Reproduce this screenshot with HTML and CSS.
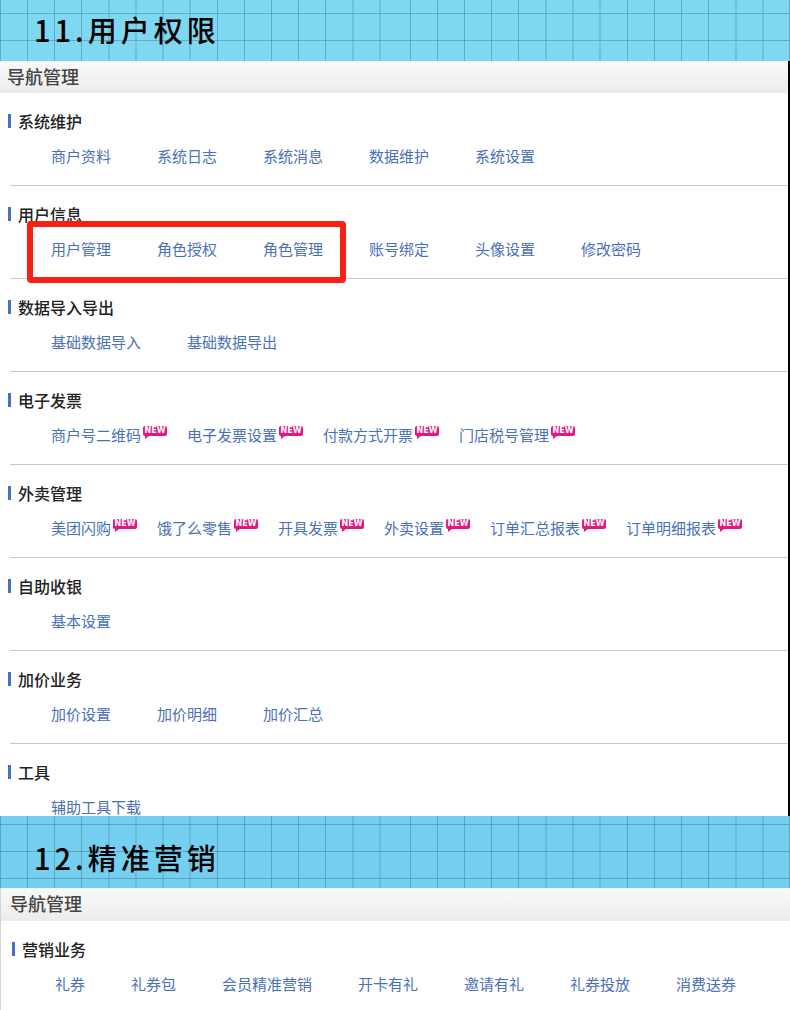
FILE: index.html
```
<!DOCTYPE html>
<html lang="zh-CN">
<head>
    <meta charset="UTF-8">
    <title>导航管理</title>
    <link rel="stylesheet" href="styles.css">
</head>
<body>
    <div class="banner">
        <svg class="grid" aria-hidden="true">
            <defs>
                <path id="columns" class="grid-line" d="M.5 0V28M27.5 0V28M54.5 0V28M81.5 0V28M109 0V28M136 0V28M163 0V28M190 0V28M217.5 0V28M244.5 0V28M271.5 0V28M298.5 0V28M325.5 0V28M353 0V28M380 0V28M410.5 0V28M437.5 0V28M464.5 0V28M491.5 0V28M518.5 0V28M546 0V28M573 0V28M600 0V28M627.5 0V28M654.5 0V28M681.5 0V28M708.5 0V28M736 0V28M763 0V28M789.5 0V28M0 13.5H790"/>
                <pattern id="grid1" width="790" height="27" patternUnits="userSpaceOnUse">
                    <use href="#columns"/>
                </pattern>
                <pattern id="grid2" y="-5" width="790" height="27" patternUnits="userSpaceOnUse">
                    <use href="#columns"/>
                </pattern>
            </defs>
            <rect width="100%" height="100%" fill="url(#grid1)"/>
        </svg>
        <h1>11.用户权限</h1>
    </div>

    <div class="panel dark-edge">
        <h2 class="panel-title">导航管理</h2>
        <div class="section">
            <h3>系统维护</h3>
            <div class="links">
                <a href="#">商户资料</a>
                <a href="#">系统日志</a>
                <a href="#">系统消息</a>
                <a href="#">数据维护</a>
                <a href="#">系统设置</a>
            </div>
        </div>
        <div class="section">
            <h3>用户信息</h3>
            <div class="links">
                <div class="marked">
                    <a href="#">用户管理</a>
                    <a href="#">角色授权</a>
                    <a href="#">角色管理</a>
                </div>
                <a href="#">账号绑定</a>
                <a href="#">头像设置</a>
                <a href="#">修改密码</a>
            </div>
        </div>
        <div class="section">
            <h3>数据导入导出</h3>
            <div class="links">
                <a href="#">基础数据导入</a>
                <a href="#">基础数据导出</a>
            </div>
        </div>
        <div class="section">
            <h3>电子发票</h3>
            <div class="links">
                <a href="#">商户号二维码<span class="new">NEW</span></a>
                <a href="#">电子发票设置<span class="new">NEW</span></a>
                <a href="#">付款方式开票<span class="new">NEW</span></a>
                <a href="#">门店税号管理<span class="new">NEW</span></a>
            </div>
        </div>
        <div class="section">
            <h3>外卖管理</h3>
            <div class="links">
                <a href="#">美团闪购<span class="new">NEW</span></a>
                <a href="#">饿了么零售<span class="new">NEW</span></a>
                <a href="#">开具发票<span class="new">NEW</span></a>
                <a href="#">外卖设置<span class="new">NEW</span></a>
                <a href="#">订单汇总报表<span class="new">NEW</span></a>
                <a href="#">订单明细报表<span class="new">NEW</span></a>
            </div>
        </div>
        <div class="section">
            <h3>自助收银</h3>
            <div class="links">
                <a href="#">基本设置</a>
            </div>
        </div>
        <div class="section">
            <h3>加价业务</h3>
            <div class="links">
                <a href="#">加价设置</a>
                <a href="#">加价明细</a>
                <a href="#">加价汇总</a>
            </div>
        </div>
        <div class="section">
            <h3>工具</h3>
            <div class="links">
                <a href="#">辅助工具下载</a>
            </div>
        </div>
    </div>

    <div class="banner banner-tall">
        <svg class="grid" aria-hidden="true">
            <rect width="100%" height="100%" fill="url(#grid2)"/>
        </svg>
        <h1>12.精准营销</h1>
    </div>

    <div class="panel light-edge">
        <h2 class="panel-title">导航管理</h2>
        <div class="section">
            <h3>营销业务</h3>
            <div class="links">
                <a href="#">礼券</a>
                <a href="#">礼券包</a>
                <a href="#">会员精准营销</a>
                <a href="#">开卡有礼</a>
                <a href="#">邀请有礼</a>
                <a href="#">礼券投放</a>
                <a href="#">消费送券</a>
            </div>
        </div>
    </div>
</body>
</html>
```
FILE: styles.css
```
*{
    margin: 0;
    padding: 0;
    box-sizing: border-box;
}
body{
    background: #fff;
    font-family: "Noto Sans CJK SC", sans-serif;
}
a{
    color: #4a70b8;
    text-decoration: none;
}
a:hover{
    text-decoration: underline;
}

/*标题横幅*/
.banner{
    position: relative;
    padding: 9px 34px 12px;
    background: #7fd8f1;
}
.banner-tall{
    padding: 21px 34px 11px;
    background: #75cff0;
}
.banner h1{
    position: relative;
    font-size: 29px;
    font-weight: 500;
    line-height: 40px;
    letter-spacing: 4px;
    color: #000;
}
/*网格铺满横幅*/
.grid{
    position: absolute;
    left: 0;
    top: 0;
    width: 100%;
    height: 100%;
}
.grid-line{
    stroke: #427f95;
    stroke-opacity: .5;
}

.dark-edge{
    border-right: 2px solid #000;
}
.light-edge{
    border-left: 1px solid #d5d5d5;
    padding-bottom: 17px;
}
.panel-title{
    padding: 0 7px 2px;
    font-size: 18px;
    font-weight: 500;
    line-height: 30px;
    color: #444;
    background: linear-gradient(#f9f9f9, #ececec);
}
.light-edge .panel-title{
    padding: 0 9px 2px;
    line-height: 31px;
}

.section{
    margin-left: 10px;
    padding: 18px 0 20px;
    border-bottom: 1px solid #c8c8c8;
}
.section:last-child{
    padding-bottom: 0;
    border-bottom: 0;
}
.section h3{
    display: flex;
    align-items: center;
    gap: 7px;
    margin-left: -2px;
    font-size: 16px;
    font-weight: 500;
    line-height: 20px;
    color: #222;
}
.section h3::before{
    content: "";
    width: 3px;
    height: 14px;
    background: #4472c0;
}
.light-edge .section{
    margin-left: 13px;
}
.links{
    display: flex;
    gap: 46px;
    padding: 16px 0 0 41px;
    font-size: 15px;
    line-height: 18px;
    white-space: nowrap;
}
.links a{
    position: relative;
}

/*红框标注*/
.marked{
    position: relative;
    display: flex;
    gap: 46px;
}
.marked::after{
    content: "";
    position: absolute;
    top: -19px;
    right: -23px;
    bottom: -25px;
    left: -24px;
    border: 6px solid #f72014;
    border-radius: 4px;
    pointer-events: none;
}

.new{
    position: absolute;
    top: 0;
    left: 100%;
    width: 24px;
    margin-left: 2px;
    border-radius: 2px;
    background: #e5177f;
    color: #fff;
    font: bold 8px/10px "DejaVu Sans", sans-serif;
    text-align: center;
}
.new::after{
    content: "";
    position: absolute;
    left: 2px;
    top: 10px;
    border-top: 3px solid #e5177f;
    border-right: 4px solid transparent;
}
```
